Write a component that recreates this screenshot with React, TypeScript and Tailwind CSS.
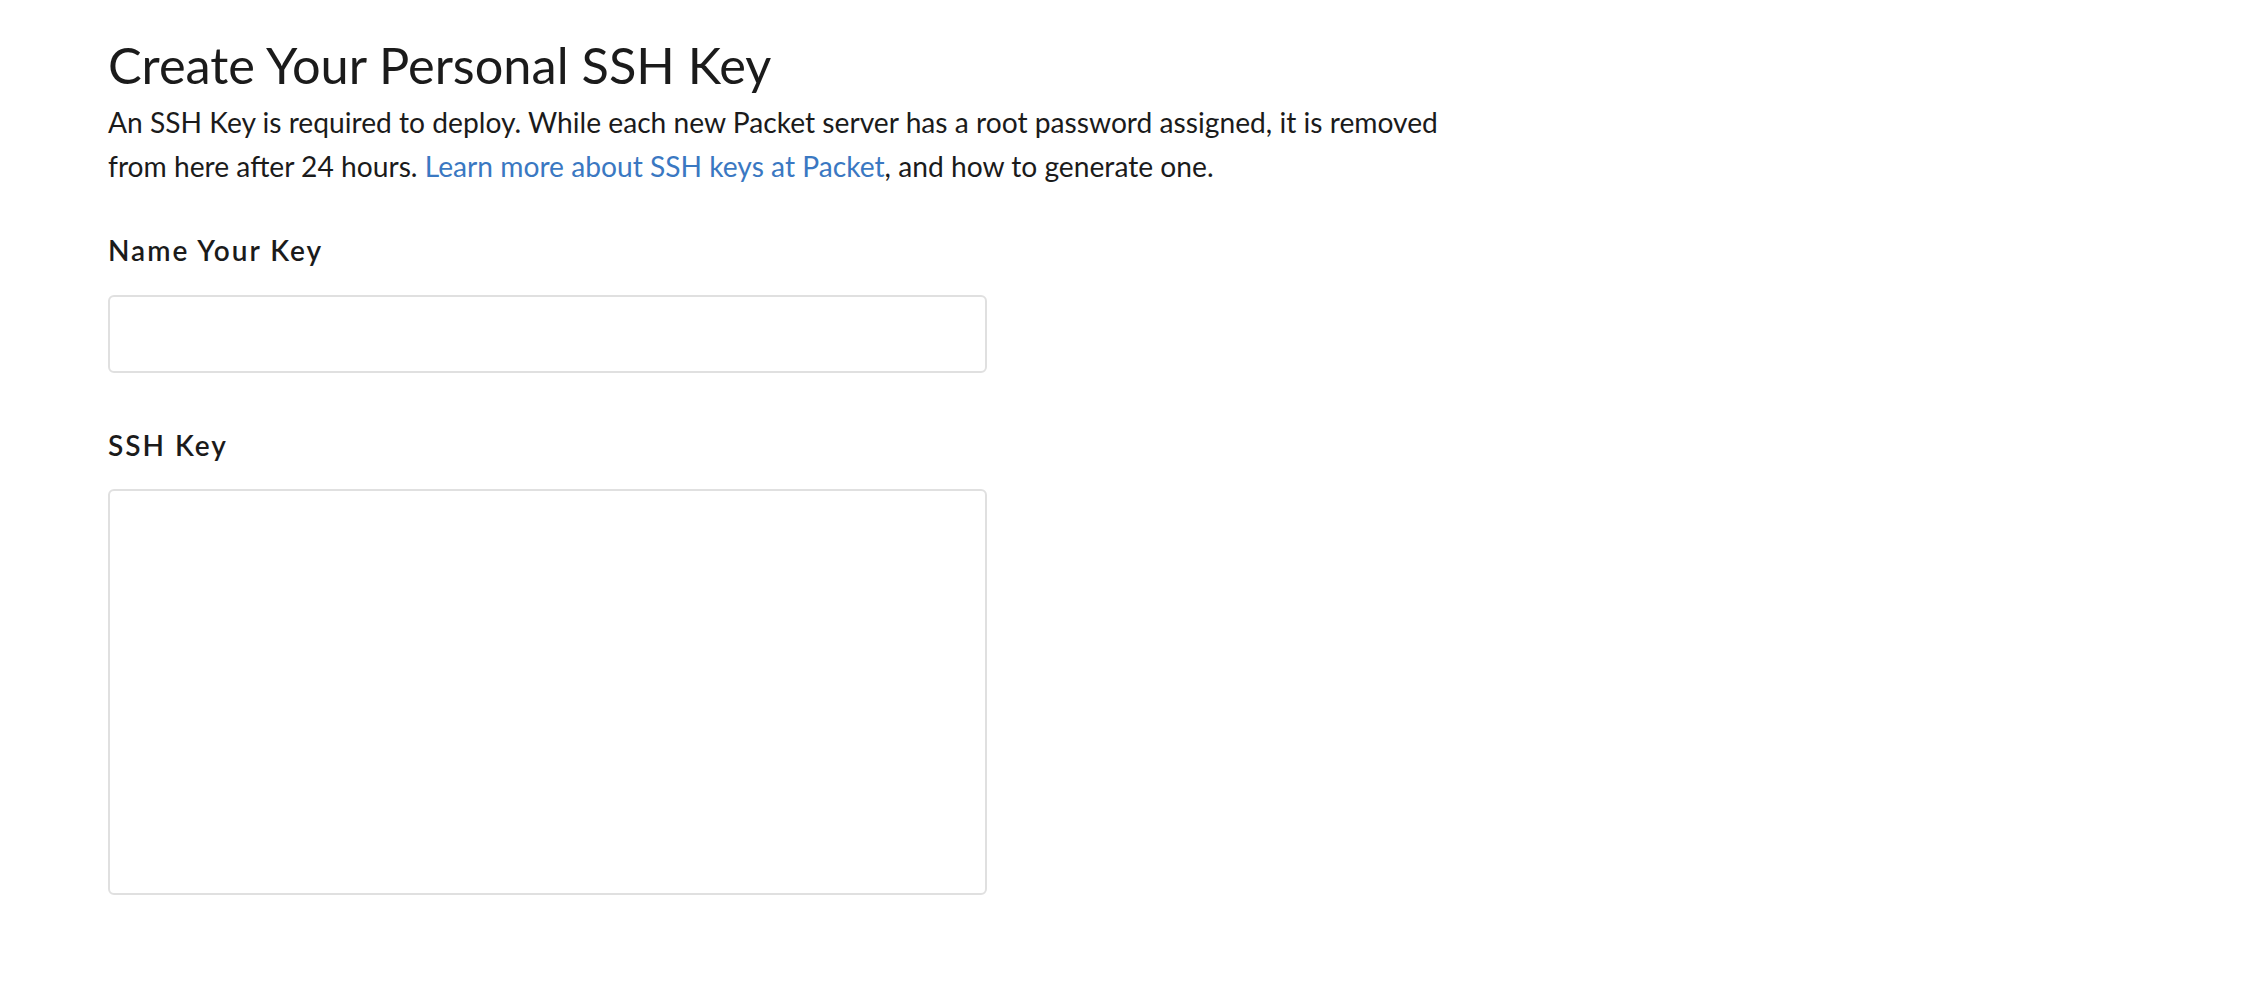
import { useState } from "react";

const SshKeyForm = () => {
  const [name, setName] = useState("");
  const [key, setKey] = useState("");

  return (
    <div className="pl-[108px] pt-[36px] text-[#1b1b1b]">
      <h1 className="text-[50.5px] leading-[58px] font-normal">
        Create Your Personal SSH Key
      </h1>
      <p className="mt-[6px] w-[1360px] text-[28.2px] leading-[44px]">
        An SSH Key is required to deploy. While each new Packet server has a
        root password assigned, it is removed from here after 24 hours.{" "}
        <a href="#" className="text-[#3a78c2]">
          Learn more about SSH keys at Packet
        </a>
        , and how to generate one.
      </p>

      <label className="mt-[46px] block text-[28px] leading-[32px] font-semibold tracking-[2px]">
        Name Your Key
      </label>
      <input
        value={name}
        onChange={(e) => setName(e.target.value)}
        className="mt-[29px] block h-[78px] w-[879px] rounded-[6px] border-2 border-[#e0e0e0] px-4 text-[24px] outline-none"
      />

      <label className="mt-[56px] block text-[28px] leading-[32px] font-semibold tracking-[2px]">
        SSH Key
      </label>
      <textarea
        value={key}
        onChange={(e) => setKey(e.target.value)}
        className="mt-[28px] block h-[406px] w-[879px] resize-none rounded-[6px] border-2 border-[#e0e0e0] p-4 text-[24px] outline-none"
      />
    </div>
  );
};

export default function App() {
  return (
    <div
      className="min-h-screen bg-white"
      style={{ fontFamily: "Lato, 'Open Sans', sans-serif" }}
    >
      <SshKeyForm />
    </div>
  );
}
